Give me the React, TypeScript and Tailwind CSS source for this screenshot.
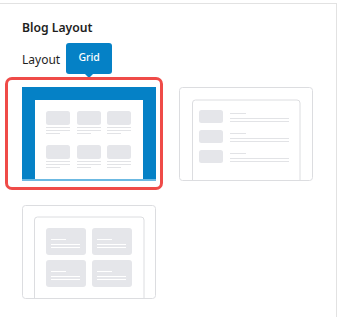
import React from "react";

const GRAY_BOX = "#e5e6ea";
const GRAY_LINE = "#e2e3e6";
const FRAME = "#dcdde0";

function GridPreview() {
  const cols = [11, 42, 72];
  const rows = [11, 45];
  return (
    <svg width="134" height="94" viewBox="0 0 134 94" className="block">
      <rect x="0" y="0" width="134" height="94" fill="#0581c6" />
      <rect x="13" y="13" width="108" height="81" fill="#ffffff" />
      <rect x="0" y="92" width="134" height="2" fill="#6cb9e2" />
      {rows.map((ry) =>
        cols.map((cx) => (
          <g key={`${cx}-${ry}`}>
            <rect x={13 + cx} y={13 + ry} width="24" height="14" rx="2.5" fill={GRAY_BOX} />
            <rect x={13 + cx} y={13 + ry + 16} width="24" height="1" fill={GRAY_LINE} />
            <rect x={13 + cx} y={13 + ry + 19} width="24" height="1" fill={GRAY_LINE} />
            <rect x={13 + cx} y={13 + ry + 22} width="14" height="1" fill={GRAY_LINE} />
          </g>
        ))
      )}
    </svg>
  );
}

function ListPreview() {
  const rows = [10, 30, 50];
  return (
    <svg width="134" height="94" viewBox="0 0 134 94" className="block">
      <rect x="0.5" y="0.5" width="133" height="93" rx="3" fill="#ffffff" stroke={FRAME} />
      <path d="M13.5 94 V16 a3 3 0 0 1 3 -3 H118 a3 3 0 0 1 3 3 V94" fill="none" stroke={FRAME} />
      {rows.map((ry) => (
        <g key={ry}>
          <rect x="20" y={13 + ry} width="24" height="13" rx="2.5" fill={GRAY_BOX} />
          <rect x="51" y={13 + ry + 3} width="16" height="1" fill={GRAY_LINE} />
          <rect x="51" y={13 + ry + 8} width="59" height="1" fill={GRAY_LINE} />
          <rect x="51" y={13 + ry + 11} width="59" height="1" fill={GRAY_LINE} />
        </g>
      ))}
    </svg>
  );
}

function CardsPreview() {
  const cols = [12, 58];
  const rows = [11, 43];
  return (
    <svg width="134" height="94" viewBox="0 0 134 94" className="block">
      <rect x="0.5" y="0.5" width="133" height="93" rx="3" fill="#ffffff" stroke={FRAME} />
      <path d="M12.5 94 V15 a3 3 0 0 1 3 -3 H119 a3 3 0 0 1 3 3 V94" fill="none" stroke={FRAME} />
      {rows.map((ry) =>
        cols.map((cx) => (
          <g key={`${cx}-${ry}`}>
            <rect x={12 + cx} y={12 + ry} width="40" height="27" rx="3" fill={GRAY_BOX} />
            <rect x={12 + cx + 5} y={12 + ry + 11} width="15" height="1" fill="#ffffff" />
            <rect x={12 + cx + 5} y={12 + ry + 16} width="29" height="1" fill="#ffffff" />
            <rect x={12 + cx + 5} y={12 + ry + 19} width="29" height="1" fill="#ffffff" />
          </g>
        ))
      )}
    </svg>
  );
}

export default function App() {
  return (
    <div
      className="w-[338px] h-[317px] bg-white overflow-hidden"
      style={{ fontFamily: '"Noto Sans", "Open Sans", sans-serif' }}
    >
      <div className="mt-[3px] w-[337px] h-[314px] border-t border-r border-[#e2e2e2] pl-[22px] pt-[15px]">
        <h2 className="text-[12.2px] font-semibold text-[#1e1e1e] leading-[18px]">Blog Layout</h2>

        <div className="mt-[13px] flex items-center h-[20px]">
          <span className="text-[12px] text-[#1e1e1e] leading-[20px]">Layout</span>
          <div className="relative ml-[6px] -mt-[4px]">
            <div className="w-[46px] h-[31px] rounded-[3px] bg-[#0581c6] flex items-center justify-center text-white text-[10.5px] font-medium">
              Grid
            </div>
            <div className="absolute left-[19px] -bottom-[4px] w-0 h-0 border-l-[4px] border-r-[4px] border-t-[4px] border-l-transparent border-r-transparent border-t-[#0581c6]" />
          </div>
        </div>

        <div className="mt-[17px] grid grid-cols-[134px_134px] gap-x-[23px] gap-y-[24px]">
          <div className="relative">
            <GridPreview />
            <div className="absolute -left-[17px] -top-[10px] -right-[7px] -bottom-[9px] rounded-[7px] border-[3px] border-[#ef4b48]" />
          </div>
          <ListPreview />
          <CardsPreview />
        </div>
      </div>
    </div>
  );
}
